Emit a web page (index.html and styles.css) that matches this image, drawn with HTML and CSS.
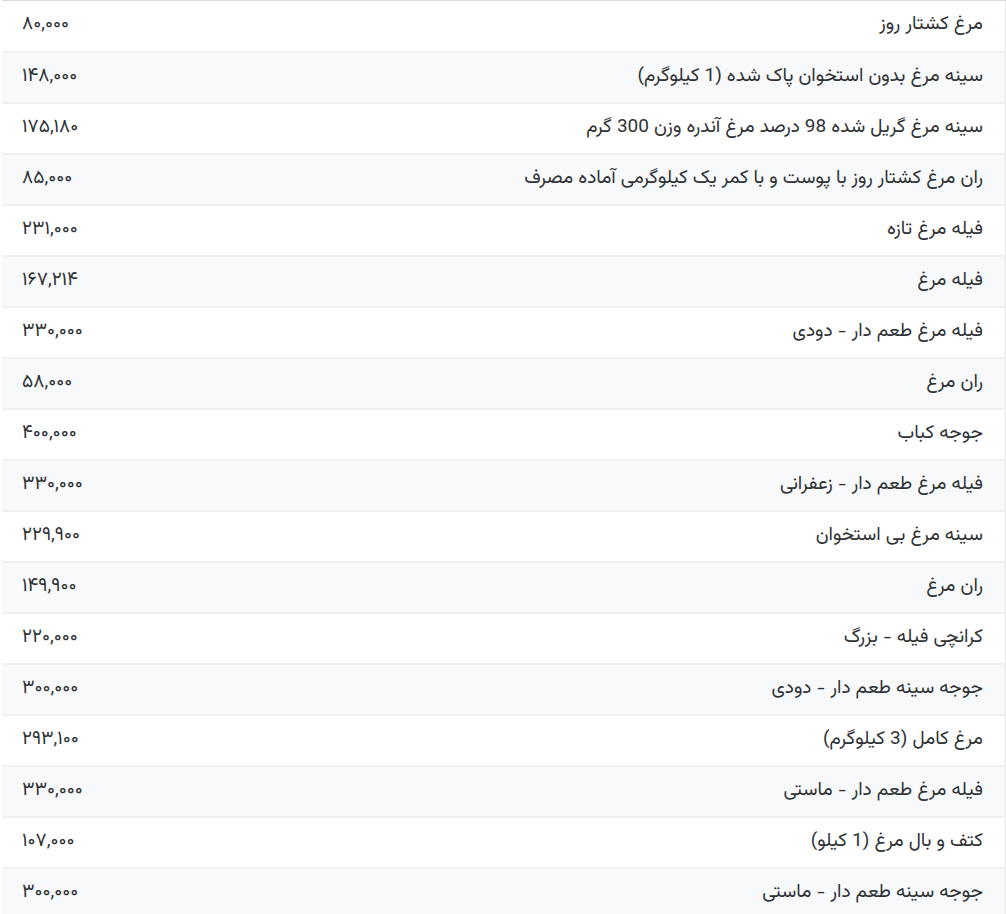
FILE: index.html
```html
<!DOCTYPE html>
<html lang="fa" dir="rtl">
<head>
<meta charset="utf-8">
<link rel="stylesheet" href="styles.css">
</head>
<body>
<table class="price-table">
<tbody>
<tr><td class="name">مرغ کشتار روز</td><td class="price">۸۰,۰۰۰</td></tr>
<tr><td class="name">سینه مرغ بدون استخوان پاک شده (1 کیلوگرم)</td><td class="price">۱۴۸,۰۰۰</td></tr>
<tr><td class="name">سینه مرغ گریل شده 98 درصد مرغ آندره وزن 300 گرم</td><td class="price">۱۷۵,۱۸۰</td></tr>
<tr><td class="name">ران مرغ کشتار روز با پوست و با کمر یک کیلوگرمی آماده مصرف</td><td class="price">۸۵,۰۰۰</td></tr>
<tr><td class="name">فیله مرغ تازه</td><td class="price">۲۳۱,۰۰۰</td></tr>
<tr><td class="name">فیله مرغ</td><td class="price">۱۶۷,۲۱۴</td></tr>
<tr><td class="name">فیله مرغ طعم دار - دودی</td><td class="price">۳۳۰,۰۰۰</td></tr>
<tr><td class="name">ران مرغ</td><td class="price">۵۸,۰۰۰</td></tr>
<tr><td class="name">جوجه کباب</td><td class="price">۴۰۰,۰۰۰</td></tr>
<tr><td class="name">فیله مرغ طعم دار - زعفرانی</td><td class="price">۳۳۰,۰۰۰</td></tr>
<tr><td class="name">سینه مرغ بی استخوان</td><td class="price">۲۲۹,۹۰۰</td></tr>
<tr><td class="name">ران مرغ</td><td class="price">۱۴۹,۹۰۰</td></tr>
<tr><td class="name">کرانچی فیله - بزرگ</td><td class="price">۲۲۰,۰۰۰</td></tr>
<tr><td class="name">جوجه سینه طعم دار - دودی</td><td class="price">۳۰۰,۰۰۰</td></tr>
<tr><td class="name">مرغ کامل (3 کیلوگرم)</td><td class="price">۲۹۳,۱۰۰</td></tr>
<tr><td class="name">فیله مرغ طعم دار - ماستی</td><td class="price">۳۳۰,۰۰۰</td></tr>
<tr><td class="name">کتف و بال مرغ (1 کیلو)</td><td class="price">۱۰۷,۰۰۰</td></tr>
<tr><td class="name">جوجه سینه طعم دار - ماستی</td><td class="price">۳۰۰,۰۰۰</td></tr>
</tbody>
</table>
</body>
</html>
```
FILE: styles.css
```css
html, body {
  margin: 0;
  padding: 0;
  background: #ffffff;
}
body {
  font-family: "Vazirmatn", "Vazir", "Noto Sans Arabic", "Noto Naskh Arabic", "DejaVu Sans", sans-serif;
  color: #2f3235;
  overflow: hidden;
}
.price-table {
  width: 1004px;
  border-collapse: collapse;
  border-top: 1px solid #d6d8da;
  border-right: 1px solid #e6e8ea;
}
.price-table tr {
  height: 51px;
  border-bottom: 2px solid #eef0f2;
}
.price-table tr:nth-child(even) {
  background: #f8f9fa;
}
.price-table td {
  padding: 0 22px 0 20px;
  vertical-align: middle;
  white-space: nowrap;
  line-height: 1.2;
}
.name {
  font-size: 19px;
  text-align: right;
}
.price {
  font-size: 19px;
  text-align: left;
  width: 200px;
  padding-left: 21px;
}
```
